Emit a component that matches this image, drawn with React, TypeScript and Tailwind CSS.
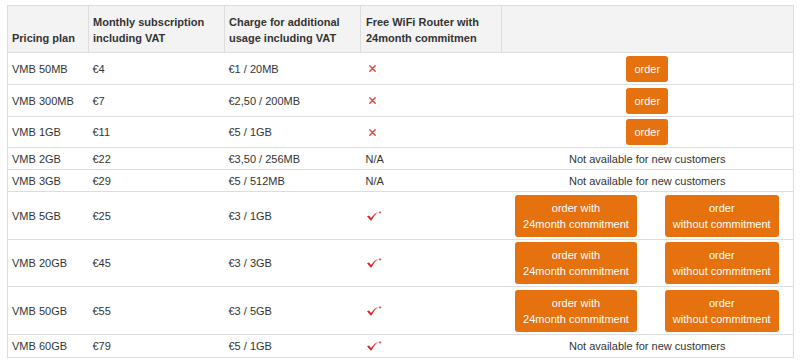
import React from "react";

type Plan = {
  name: string;
  monthly: string;
  extra: string;
  router: "x" | "na" | "check";
  action: "order" | "none" | "both";
  h: string;
};

const plans: Plan[] = [
  { name: "VMB 50MB", monthly: "€4", extra: "€1 / 20MB", router: "x", action: "order", h: "h-[32px]" },
  { name: "VMB 300MB", monthly: "€7", extra: "€2,50 / 200MB", router: "x", action: "order", h: "h-[32px]" },
  { name: "VMB 1GB", monthly: "€11", extra: "€5 / 1GB", router: "x", action: "order", h: "h-[31px]" },
  { name: "VMB 2GB", monthly: "€22", extra: "€3,50 / 256MB", router: "na", action: "none", h: "h-[22px]" },
  { name: "VMB 3GB", monthly: "€29", extra: "€5 / 512MB", router: "na", action: "none", h: "h-[22px]" },
  { name: "VMB 5GB", monthly: "€25", extra: "€3 / 1GB", router: "check", action: "both", h: "h-[48px]" },
  { name: "VMB 20GB", monthly: "€45", extra: "€3 / 3GB", router: "check", action: "both", h: "h-[47px]" },
  { name: "VMB 50GB", monthly: "€55", extra: "€3 / 5GB", router: "check", action: "both", h: "h-[48px]" },
  { name: "VMB 60GB", monthly: "€79", extra: "€5 / 1GB", router: "check", action: "none", h: "h-[23px]" },
];

function Cross() {
  return (
    <svg width="9" height="9" viewBox="0 0 9 9" className="ml-[2px] block">
      <path d="M1.8 1.8 L7.2 7.2 M7.2 1.8 L1.8 7.2" stroke="#dc4a44" strokeWidth="1.5" strokeLinecap="round" />
    </svg>
  );
}

function Check() {
  return (
    <span className="flex items-start">
      <svg width="13" height="10" viewBox="0 0 13 10" className="block">
        <path d="M1 5.2 L3.2 4.4 L5 7 Q8 2.6 12.4 0.6 Q8.6 3.6 5.4 9.4 L4.6 9.4 Z" fill="#d8282a" />
      </svg>
      <span className="-mt-[1px] text-[8px] leading-[8px] text-[#d8282a]">*</span>
    </span>
  );
}

function OrderButton({ children }: { children: React.ReactNode }) {
  return (
    <button className="block rounded-[3px] bg-[#e5720f] px-[8px] py-[5px] text-[11px] leading-4 text-white">
      {children}
    </button>
  );
}

export default function App() {
  return (
    <div className="min-h-[360px] bg-white pl-[7px] pt-[5px] font-['Liberation_Sans'] text-[11px] text-[#333]">
      <table className="w-[786px] table-fixed border-collapse border border-[#dddddd]">
        <colgroup>
          <col className="w-[81px]" />
          <col className="w-[136px]" />
          <col className="w-[136px]" />
          <col className="w-[141px]" />
          <col className="w-[146px]" />
          <col className="w-[146px]" />
        </colgroup>
        <thead>
          <tr className="h-[47px] bg-[#f3f3f3]">
            <th className="border-r border-[#dddddd] px-[4px] pb-[6px] text-left align-bottom font-bold leading-4">
              Pricing plan
            </th>
            <th className="border-r border-[#dddddd] px-[4px] pb-[6px] text-left align-bottom font-bold leading-4">
              Monthly subscription including VAT
            </th>
            <th className="border-r border-[#dddddd] px-[4px] pb-[6px] text-left align-bottom font-bold leading-4">
              Charge for additional usage including VAT
            </th>
            <th className="border-r border-[#dddddd] px-[5px] pb-[6px] text-left align-bottom font-bold leading-4">
              Free WiFi Router with 24month commitmen
            </th>
            <th colSpan={2}></th>
          </tr>
        </thead>
        <tbody>
          {plans.map((p) => (
            <tr key={p.name} className={`${p.h} border-t border-[#dddddd] leading-4`}>
              <td className="px-[4px] py-0 align-middle">{p.name}</td>
              <td className="px-[4px] py-0 align-middle">{p.monthly}</td>
              <td className="px-[4px] py-0 align-middle">{p.extra}</td>
              <td className="px-[5px] py-0 align-middle">
                {p.router === "x" && <Cross />}
                {p.router === "na" && "N/A"}
                {p.router === "check" && <Check />}
              </td>
              {p.action === "order" && (
                <td colSpan={2} className="p-0 align-middle">
                  <div className="flex justify-center">
                    <OrderButton>order</OrderButton>
                  </div>
                </td>
              )}
              {p.action === "none" && (
                <td colSpan={2} className="p-0 text-center align-middle">
                  Not available for new customers
                </td>
              )}
              {p.action === "both" && (
                <>
                  <td className="p-0 align-middle">
                    <div className="flex justify-center pl-[3px]">
                      <OrderButton>
                        order with
                        <br />
                        24month commitment
                      </OrderButton>
                    </div>
                  </td>
                  <td className="p-0 align-middle">
                    <div className="flex justify-center pl-[3px]">
                      <OrderButton>
                        order
                        <br />
                        without commitment
                      </OrderButton>
                    </div>
                  </td>
                </>
              )}
            </tr>
          ))}
        </tbody>
      </table>
    </div>
  );
}
